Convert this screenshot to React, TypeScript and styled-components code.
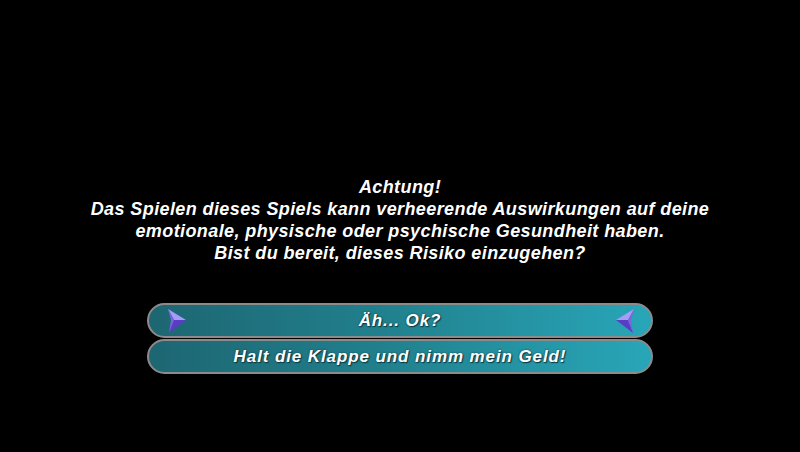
import React from 'react';
import styled, { createGlobalStyle } from 'styled-components';

const GlobalStyle = createGlobalStyle`
  html, body {
    margin: 0;
    padding: 0;
    background: #000;
  }
`;

const Screen = styled.div`
  width: 800px;
  height: 452px;
  background: #000;
  display: flex;
  flex-direction: column;
  align-items: center;
  overflow: hidden;
  font-family: 'Liberation Sans', Arial, sans-serif;
  font-weight: bold;
  font-style: italic;
  color: #fff;
`;

const Message = styled.div`
  margin-top: 176px;
  width: 800px;
  text-align: center;
  font-size: 18px;
  line-height: 22px;
  letter-spacing: 0.4px;
`;

const Line = styled.div`
  white-space: nowrap;
`;

const Choices = styled.div`
  margin-top: 39px;
  width: 506px;
  display: flex;
  flex-direction: column;
  gap: 1px;
`;

const Choice = styled.div`
  position: relative;
  height: 31px;
  border: 2px solid #8b8b8b;
  border-radius: 18px;
  background: linear-gradient(90deg, #1d6672 0%, #217f8c 45%, #28a6b8 100%);
  display: flex;
  align-items: center;
  justify-content: center;
  font-size: 17px;
  letter-spacing: 0.9px;
  text-shadow: 0 0 2px #0c3a44, 1px 1px 1px #0c3a44;
`;

const Pointer = styled.svg<{ $side: 'left' | 'right' }>`
  position: absolute;
  top: 3px;
  width: 20px;
  height: 26px;
  ${({ $side }) => ($side === 'left' ? 'left: 18px;' : 'right: 16px; transform: scaleX(-1);')}
`;

const Arrow: React.FC<{ side: 'left' | 'right' }> = ({ side }) => (
  <Pointer $side={side} viewBox="0 0 20 26">
    <polygon points="1,1 19,12 7,12" fill="#a79cf5" />
    <polygon points="7,12 19,12 2,25" fill="#5b3cc4" />
    <polygon points="1,1 7,12 2,25 4,12" fill="#7a64e0" />
  </Pointer>
);

const App: React.FC = () => (
  <>
    <GlobalStyle />
    <Screen>
      <Message>
        <Line>Achtung!</Line>
        <Line>Das Spielen dieses Spiels kann verheerende Auswirkungen auf deine</Line>
        <Line>emotionale, physische oder psychische Gesundheit haben.</Line>
        <Line>Bist du bereit, dieses Risiko einzugehen?</Line>
      </Message>
      <Choices>
        <Choice>
          <Arrow side="left" />
          Äh... Ok?
          <Arrow side="right" />
        </Choice>
        <Choice>Halt die Klappe und nimm mein Geld!</Choice>
      </Choices>
    </Screen>
  </>
);

export default App;
